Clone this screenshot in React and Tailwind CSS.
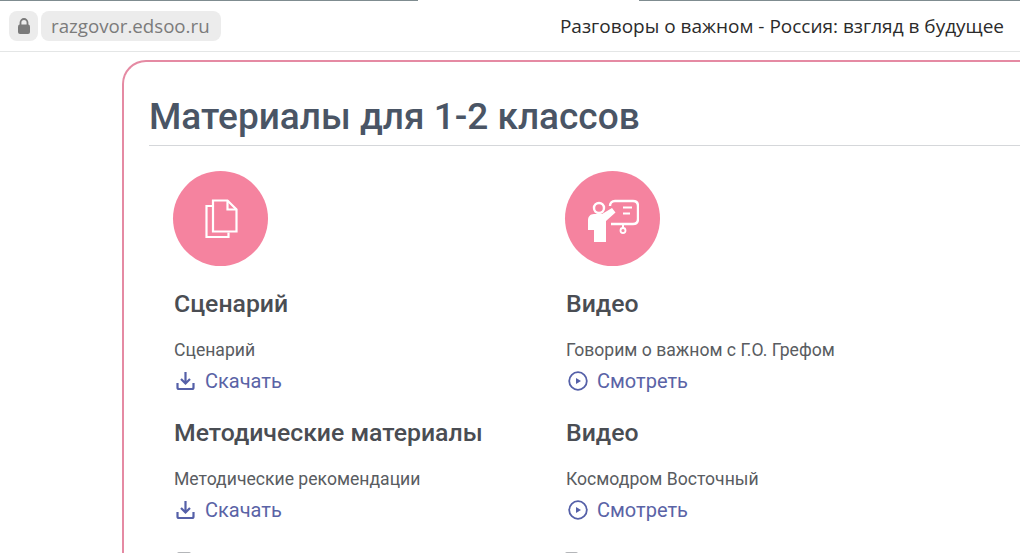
const roboto = { fontFamily: 'Roboto, sans-serif' }
const chrome = { fontFamily: '"Open Sans", sans-serif' }

function LockIcon() {
  return (
    <svg width="14" height="17" viewBox="0 0 14 17" fill="none">
      <path d="M3.500 7V4.500a3.500 3.500 0 0 1 7 0V7" stroke="#7a7a7a" strokeWidth="1.800" />
      <rect x="1" y="6.500" width="12" height="9.500" rx="2" fill="#7a7a7a" />
    </svg>
  )
}

function DocsIcon() {
  return (
    <svg width="36" height="40" viewBox="0 0 36 40" fill="none" stroke="white" strokeWidth="2.200">
      <path d="M9 7H3.500v31h22v-4.500" />
      <path d="M10 1.500h14.500l9 9v22H10z" />
      <path d="M24.500 1.500v9h9" />
    </svg>
  )
}

function TeacherIcon() {
  return (
    <svg width="52" height="48" viewBox="0 0 52 48" fill="none">
      <circle cx="12" cy="13" r="5" stroke="white" strokeWidth="2.400" />
      <path d="M1 25c0-3 2-6 6-6h8l10-6 3.500 4.500-9.500 8.500V47H7V35H1z" fill="white" />
      <path d="M23 11c0-3 2-5 5-5h18c3 0 5 2 5 5v13c0 3-2 5-5 5H24" stroke="white" strokeWidth="2.400" />
      <path d="M36 12.500h9M36 18.500h7" stroke="white" strokeWidth="2.200" />
      <path d="M36 29v4" stroke="white" strokeWidth="2" />
      <circle cx="36" cy="35.500" r="2.500" stroke="white" strokeWidth="1.800" />
    </svg>
  )
}

function DownloadIcon() {
  return (
    <svg width="19" height="20" viewBox="0 0 19 20" fill="none" stroke="#5560a8" strokeWidth="2.200">
      <path d="M9.500 1v11.500M5 8l4.500 4.500L14 8" />
      <path d="M1.500 12v4.500c0 1 .5 1.500 1.500 1.500h13c1 0 1.500-.5 1.500-1.500V12" />
    </svg>
  )
}

function PlayIcon() {
  return (
    <svg width="20" height="20" viewBox="0 0 20 20" fill="none">
      <circle cx="10" cy="10" r="8.800" stroke="#5560a8" strokeWidth="1.800" />
      <path d="M8 7l5 3-5 3z" fill="#5560a8" />
    </svg>
  )
}

function Material({ title, text, kind }) {
  return (
    <div className="h-[129px] pl-px">
      <h3 className="text-[24.800px] leading-[32px] font-medium text-[#4a4d53] whitespace-nowrap">{title}</h3>
      <p className="mt-[18px] text-[17.600px] leading-[24px] text-[#595c61] whitespace-nowrap">{text}</p>
      <a className="mt-[6px] flex items-center gap-[8px] text-[20px] leading-[26px] text-[#5a63a6]">
        <span className="flex w-[23px] justify-center">{kind === 'play' ? <PlayIcon /> : <DownloadIcon />}</span>
        {kind === 'play' ? 'Смотреть' : 'Скачать'}
      </a>
    </div>
  )
}

export default function App() {
  return (
    <div className="h-[553px] w-[1020px] overflow-hidden bg-white" style={roboto}>
      <div className="flex h-px justify-between">
        <div className="w-[418px] bg-[#7f8c90]" />
        <div className="w-[381px] bg-[#7f8c90]" />
      </div>
      <header className="flex h-[51px] items-center justify-between border-b border-[#e4e6e6] pl-[9px] pr-[16px]">
        <div className="flex items-center gap-[3px]">
          <div className="flex h-[30px] w-[29px] items-center justify-center rounded-[8px] bg-[#ececec]">
            <LockIcon />
          </div>
          <div className="flex h-[30px] w-[180px] items-center rounded-[8px] bg-[#ececec] pl-[10px] text-[18.700px] text-[#7b7b7b] whitespace-nowrap" style={chrome}>
            razgovor.edsoo.ru
          </div>
        </div>
        <div className="text-[19px] text-[#2b2b2b] whitespace-nowrap" style={chrome}>
          Разговоры о важном - Россия: взгляд в будущее
        </div>
      </header>
      <main className="mt-[8px] ml-[122px] h-[600px] rounded-tl-[24px] border-t-2 border-l-2 border-[#e58aa3] pl-[25px]">
        <h1 className="mt-[30px] h-[54px] border-b border-[#d5d7da] text-[37px] leading-[50px] font-medium text-[#4a5565] whitespace-nowrap">
          Материалы для 1-2 классов
        </h1>
        <div className="mt-[25px] grid grid-cols-[392px_1fr] pl-[24px]">
          <div>
            <div className="flex h-[95px] w-[95px] items-center justify-center rounded-full bg-[#f5839f]"><DocsIcon /></div>
            <div className="mt-[22px]">
              <Material title="Сценарий" text="Сценарий" />
              <Material title="Методические материалы" text="Методические рекомендации" />
              <span className="mt-[6px] ml-[4px] block h-[2px] w-[14px] rounded-t-[2px] bg-[#b4b6b9]" />
            </div>
          </div>
          <div>
            <div className="flex h-[95px] w-[95px] items-center justify-center rounded-full bg-[#f5839f]"><TeacherIcon /></div>
            <div className="mt-[22px]">
              <Material title="Видео" text="Говорим о важном с Г.О. Грефом" kind="play" />
              <Material title="Видео" text="Космодром Восточный" kind="play" />
              <span className="mt-[6px] block h-[2px] w-[13px] rounded-t-[2px] bg-[#b4b6b9]" />
            </div>
          </div>
        </div>
      </main>
    </div>
  )
}
